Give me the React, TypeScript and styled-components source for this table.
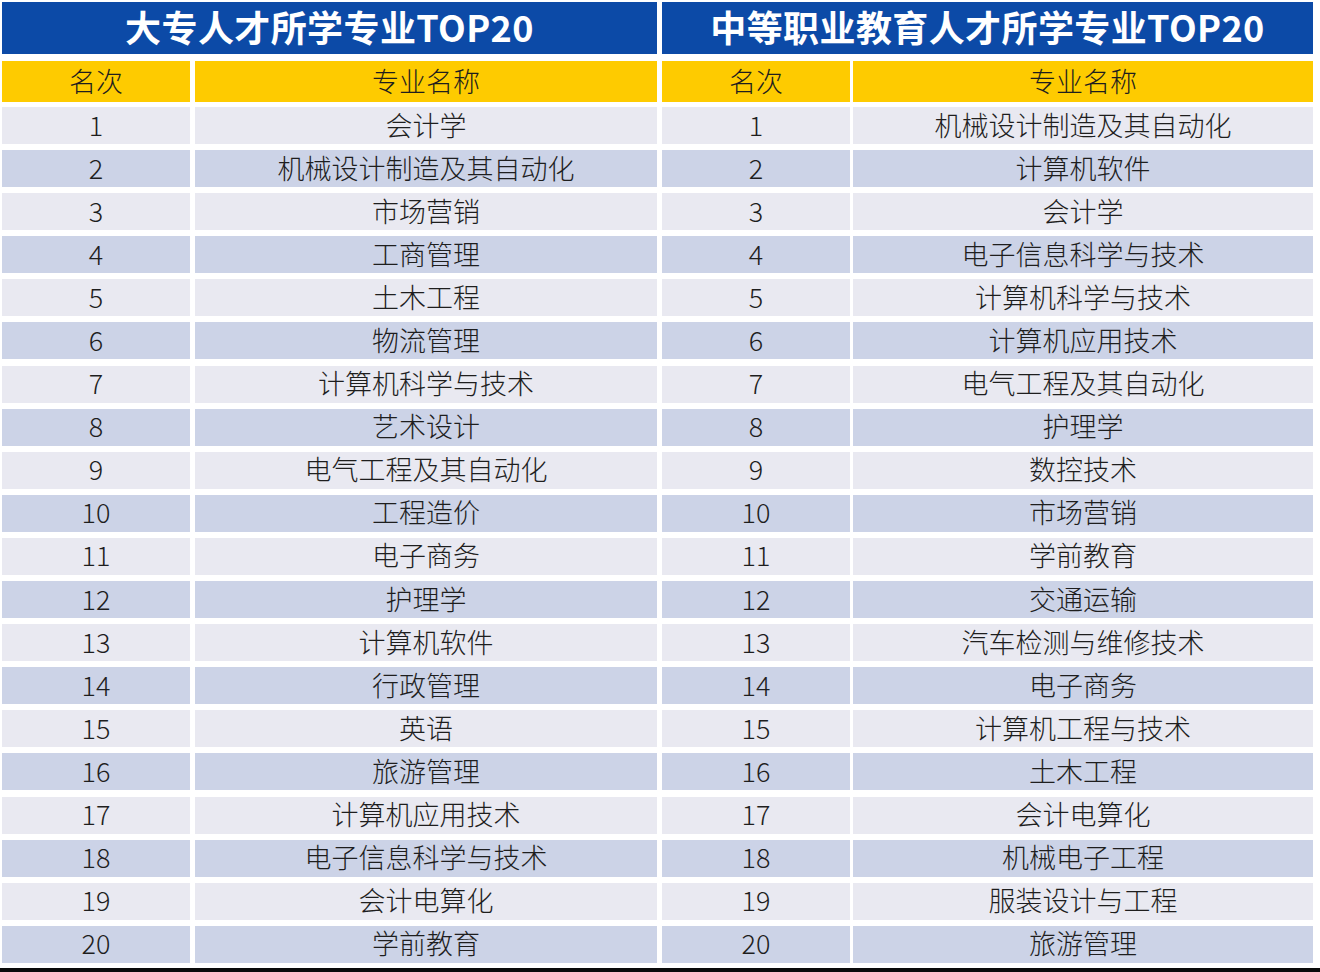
import React from "react";
import styled, { createGlobalStyle } from "styled-components";

const GlobalStyle = createGlobalStyle`
  html, body { margin: 0; padding: 0; background: #ffffff; }
  body { font-family: "Noto Sans CJK SC", "Noto Sans", sans-serif; }
`;

const Page = styled.div`
  width: 1320px;
  height: 972px;
  display: flex;
  flex-direction: column;
  background: #ffffff;
  overflow: hidden;
`;

const Tables = styled.div`
  display: flex;
  gap: 5px;
  padding: 2px 0 0 2px;
`;

const Table = styled.section<{ $width: number }>`
  width: ${(p) => p.$width}px;
  display: flex;
  flex-direction: column;
`;

const Title = styled.h1`
  margin: 0 0 7px;
  height: 52px;
  box-sizing: border-box;
  padding-bottom: 5px;
  background: #0c4aa7;
  color: #ffffff;
  font-family: "Noto Sans CJK SC", "Noto Sans", sans-serif;
  font-weight: 700;
  font-size: 36px;
  letter-spacing: 0.4px;
  display: flex;
  align-items: center;
  justify-content: center;
  line-height: 1;
`;

const Row = styled.div<{ $gap: number }>`
  display: grid;
  grid-template-columns: 188px 1fr;
  column-gap: ${(p) => p.$gap}px;
`;

const HeaderRow = styled(Row)`
  height: 41px;
  margin-bottom: 5px;
`;

const Body = styled.div`
  display: flex;
  flex-direction: column;
  gap: 6.1px;
`;

const Cell = styled.div<{ $tone: "head" | "light" | "dark" }>`
  display: flex;
  align-items: center;
  justify-content: center;
  box-sizing: border-box;
  height: 100%;
  min-height: 37px;
  padding-bottom: 3px;
  background: ${(p) =>
    p.$tone === "head" ? "#fecb00" : p.$tone === "light" ? "#e9e9f1" : "#ccd3e7"};
  color: #1e1e1e;
  font-family: "Noto Sans CJK SC", "Noto Sans", sans-serif;
  font-weight: 300;
  font-size: 27px;
  line-height: 1;
`;

const BottomBar = styled.div`
  margin-top: auto;
  height: 4px;
  background: #0a0a0a;
`;

const left = [
  "会计学",
  "机械设计制造及其自动化",
  "市场营销",
  "工商管理",
  "土木工程",
  "物流管理",
  "计算机科学与技术",
  "艺术设计",
  "电气工程及其自动化",
  "工程造价",
  "电子商务",
  "护理学",
  "计算机软件",
  "行政管理",
  "英语",
  "旅游管理",
  "计算机应用技术",
  "电子信息科学与技术",
  "会计电算化",
  "学前教育",
];

const right = [
  "机械设计制造及其自动化",
  "计算机软件",
  "会计学",
  "电子信息科学与技术",
  "计算机科学与技术",
  "计算机应用技术",
  "电气工程及其自动化",
  "护理学",
  "数控技术",
  "市场营销",
  "学前教育",
  "交通运输",
  "汽车检测与维修技术",
  "电子商务",
  "计算机工程与技术",
  "土木工程",
  "会计电算化",
  "机械电子工程",
  "服装设计与工程",
  "旅游管理",
];

function RankTable({
  title,
  items,
  width,
  gap,
}: {
  title: string;
  items: string[];
  width: number;
  gap: number;
}) {
  return (
    <Table $width={width}>
      <Title>{title}</Title>
      <HeaderRow $gap={gap}>
        <Cell $tone="head">名次</Cell>
        <Cell $tone="head">专业名称</Cell>
      </HeaderRow>
      <Body>
        {items.map((name, i) => {
          const tone = i % 2 === 0 ? "light" : "dark";
          return (
            <Row key={i} $gap={gap}>
              <Cell $tone={tone}>{i + 1}</Cell>
              <Cell $tone={tone}>{name}</Cell>
            </Row>
          );
        })}
      </Body>
    </Table>
  );
}

export default function App() {
  return (
    <>
      <GlobalStyle />
      <Page>
        <Tables>
          <RankTable title="大专人才所学专业TOP20" items={left} width={655} gap={5} />
          <RankTable title="中等职业教育人才所学专业TOP20" items={right} width={651} gap={3} />
        </Tables>
        <BottomBar />
      </Page>
    </>
  );
}
